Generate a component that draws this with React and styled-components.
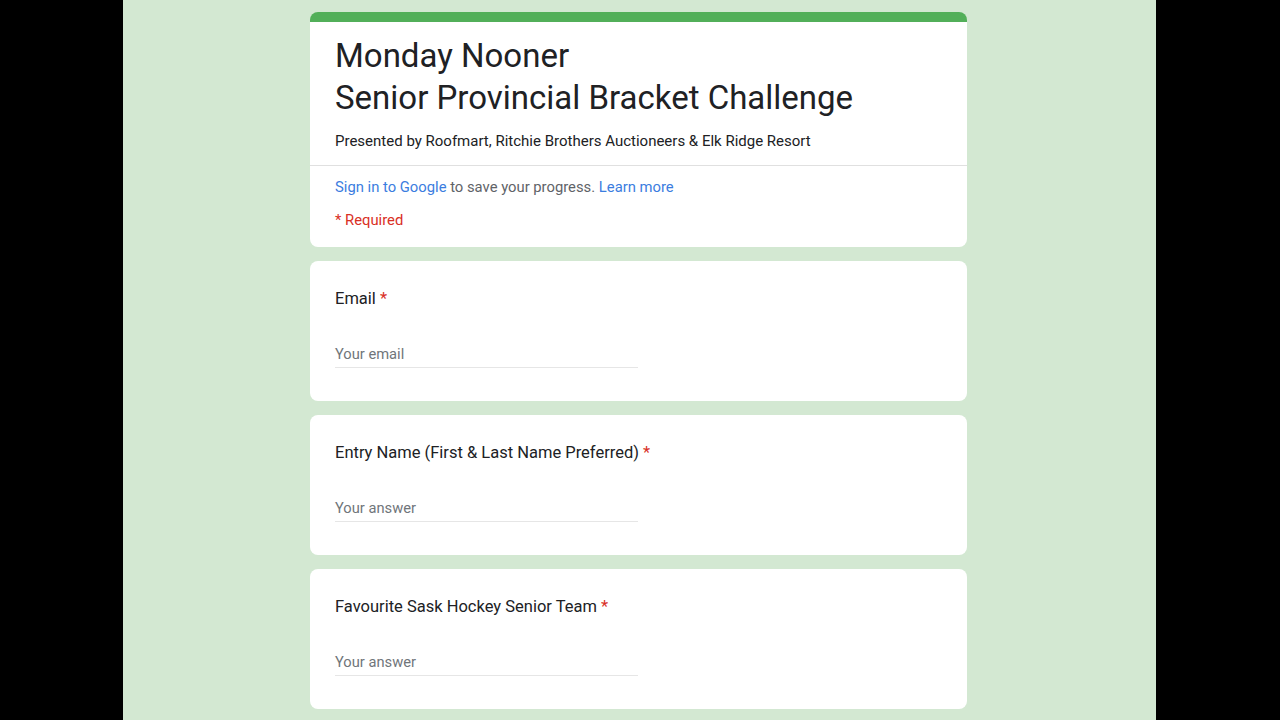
import React from "react";
import styled, { createGlobalStyle } from "styled-components";

const Global = createGlobalStyle`
  html, body { margin: 0; padding: 0; background: #000; height: 100%; overflow: hidden; }
  body { font-family: Roboto, "Liberation Sans", Arial, sans-serif; }
  #root { height: 100%; }
`;

const Stage = styled.div`
  width: 1033px;
  height: 720px;
  margin-left: 123px;
  background: #d3e8d2;
  overflow: hidden;
`;

const Column = styled.div`
  width: 657px;
  margin-left: 187px;
  padding-top: 12px;
  display: flex;
  flex-direction: column;
  gap: 14px;
`;

const Card = styled.div`
  background: #fff;
  border-radius: 8px;
  overflow: hidden;
  ${(p) => p.$accent && `border-top: 10px solid #52af59;`}
`;

const HeaderTop = styled.div`
  padding: 13px 25px 14px;
  border-bottom: 1px solid #e0e0e0;
`;

const Title = styled.h1`
  margin: 0;
  font-weight: 400;
  font-size: 33px;
  line-height: 42px;
  color: #202124;
`;

const Subtitle = styled.div`
  margin-top: 12px;
  font-size: 15px;
  line-height: 20px;
  color: #202124;
`;

const HeaderBottom = styled.div`
  padding: 11px 25px 17px;
  display: flex;
  flex-direction: column;
  gap: 13px;
  font-size: 14.8px;
  line-height: 20px;
  color: #5f6368;
`;

const Link = styled.a`
  color: #3b7de0;
  text-decoration: none;
`;

const Required = styled.div`
  color: #d93025;
`;

const Question = styled(Card)`
  height: 140px;
  box-sizing: border-box;
  padding: 26px 25px 0;
`;

const Label = styled.div`
  font-size: 16.5px;
  line-height: 24px;
  color: #202124;
`;

const Star = styled.span`
  color: #d93025;
`;

const Input = styled.div`
  margin-top: 33px;
  width: 303px;
  border-bottom: 1px solid #e6e6e6;
  padding-bottom: 3px;
  font-size: 14.7px;
  line-height: 20px;
  color: #70757a;
`;

const questions = [
  { label: "Email", placeholder: "Your email" },
  { label: "Entry Name (First & Last Name Preferred)", placeholder: "Your answer" },
  { label: "Favourite Sask Hockey Senior Team", placeholder: "Your answer" },
];

export default function App() {
  return (
    <>
      <Global />
      <Stage>
        <Column>
          <Card $accent>
            <HeaderTop>
              <Title>
                Monday Nooner
                <br />
                Senior Provincial Bracket Challenge
              </Title>
              <Subtitle>
                Presented by Roofmart, Ritchie Brothers Auctioneers &amp; Elk Ridge Resort
              </Subtitle>
            </HeaderTop>
            <HeaderBottom>
              <div>
                <Link href="#">Sign in to Google</Link> to save your progress.{" "}
                <Link href="#">Learn more</Link>
              </div>
              <Required>* Required</Required>
            </HeaderBottom>
          </Card>
          {questions.map((q) => (
            <Question key={q.label}>
              <Label>
                {q.label} <Star>*</Star>
              </Label>
              <Input>{q.placeholder}</Input>
            </Question>
          ))}
        </Column>
      </Stage>
    </>
  );
}
